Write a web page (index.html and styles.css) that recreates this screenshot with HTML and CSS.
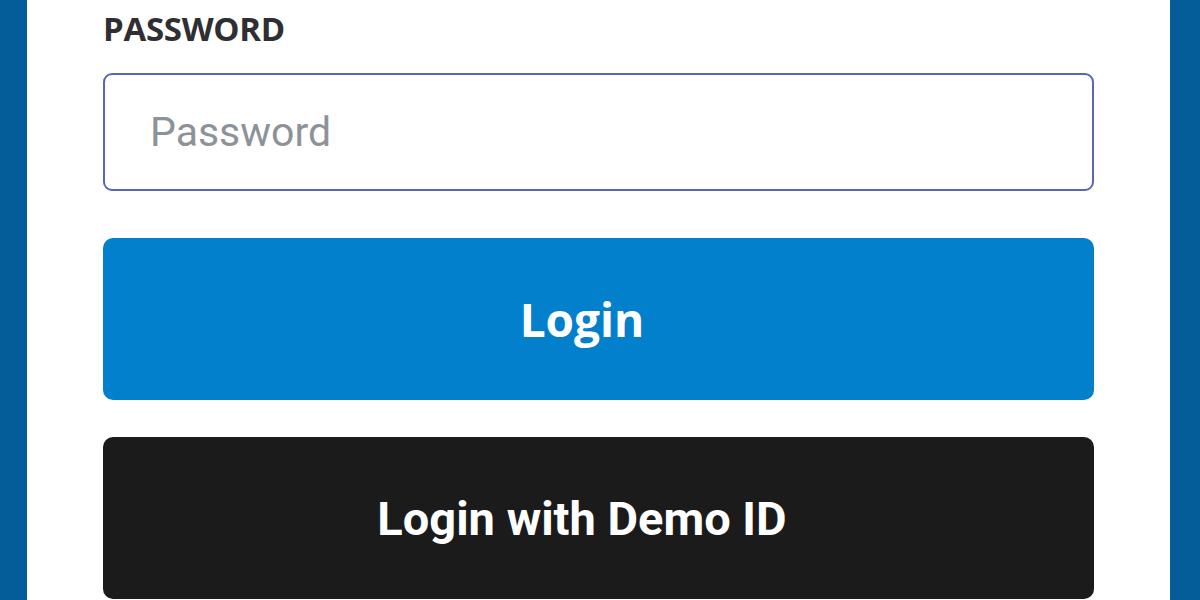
FILE: index.html
```html
<!DOCTYPE html>
<html lang="en">
<head>
<meta charset="utf-8">
<title>Login</title>
<link rel="stylesheet" href="styles.css">
</head>
<body>
  <div class="page">
    <form class="card">
      <label class="label" for="pw">PASSWORD</label>
      <input class="input" id="pw" type="password" placeholder="Password">
      <button type="button" class="btn btn-primary">Login</button>
      <button type="button" class="btn btn-dark">Login with Demo ID</button>
    </form>
  </div>
</body>
</html>
```

FILE: styles.css
```css
html, body {
  margin: 0;
  padding: 0;
  height: 100%;
}
body {
  background: #045d98;
  overflow: hidden;
}
.page {
  display: flex;
  height: 600px;
  padding: 0 30px 0 27px;
}
.card {
  flex: 1;
  background: #ffffff;
  padding: 7px 76px 0 76px;
  display: flex;
  flex-direction: column;
}
.label {
  font-family: "Open Sans", "Liberation Sans", sans-serif;
  font-weight: 700;
  font-size: 33px;
  line-height: 44px;
  color: #2f2f33;
  letter-spacing: -0.3px;
}
.input {
  margin-top: 22px;
  box-sizing: border-box;
  height: 118px;
  width: 100%;
  border: 2px solid #5b64b6;
  border-radius: 9px;
  padding: 0 20px 0 45px;
  font-family: Roboto, "Liberation Sans", sans-serif;
  font-size: 41px;
  color: #333;
  background: #fff;
  outline: none;
}
.input::placeholder {
  color: #8d9298;
}
.btn {
  box-sizing: border-box;
  width: 100%;
  height: 162px;
  border: none;
  border-radius: 10px;
  color: #ffffff;
  padding: 0 33px 0 0;
  display: flex;
  align-items: center;
  justify-content: center;
  cursor: pointer;
}
.btn-primary {
  margin-top: 47px;
  background: #0280cc;
  font-family: "Open Sans", "Liberation Sans", sans-serif;
  font-weight: 700;
  font-size: 46px;
}
.btn-dark {
  margin-top: 37px;
  background: #1b1b1c;
  font-family: Roboto, "Liberation Sans", sans-serif;
  font-weight: 700;
  font-size: 47px;
}
```
